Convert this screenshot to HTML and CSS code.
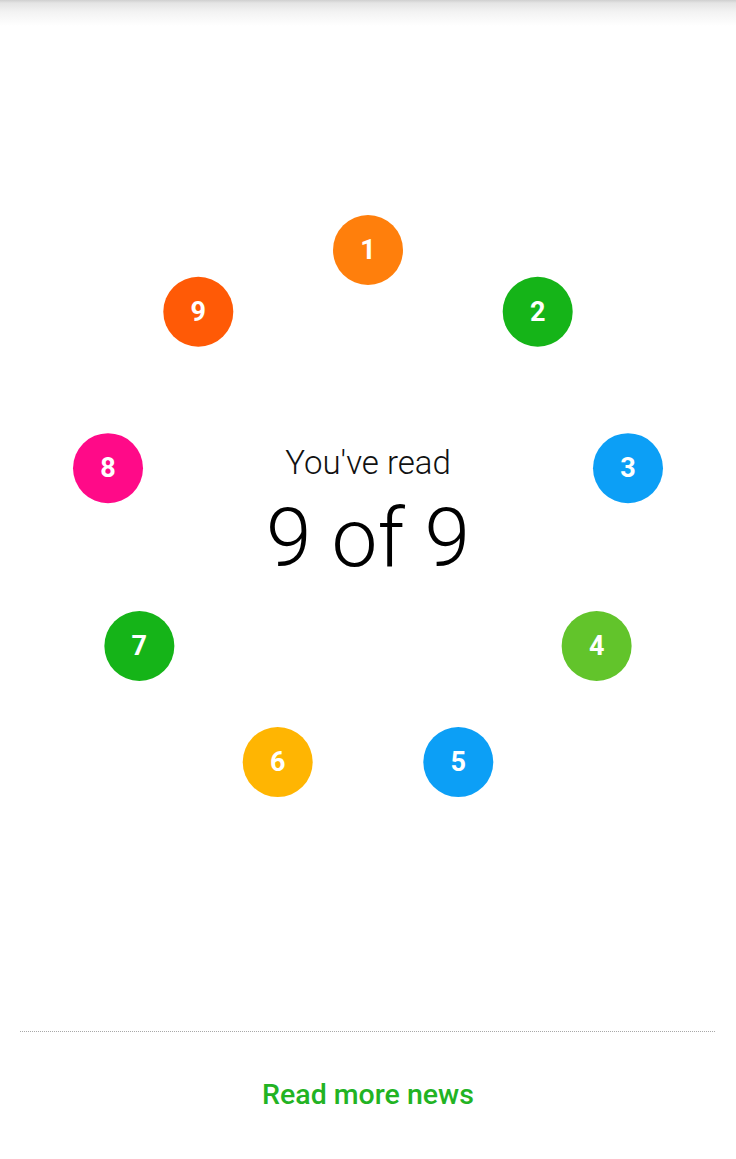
FILE: index.html
```html
<!DOCTYPE html>
<html>
<head>
<meta charset="utf-8">
<link rel="stylesheet" href="styles.css">
</head>
<body>
<div class="page">
  <div class="top-shadow"></div>
  <main class="stage">
    <div class="ring">
      <div class="dot n1">1</div>
      <div class="dot n2">2</div>
      <div class="dot n3">3</div>
      <div class="dot n4">4</div>
      <div class="dot n5">5</div>
      <div class="dot n6">6</div>
      <div class="dot n7">7</div>
      <div class="dot n8">8</div>
      <div class="dot n9">9</div>
      <div class="summary">
        <div class="label">You've read</div>
        <div class="count">9 of 9</div>
      </div>
    </div>
  </main>
  <footer class="footer">
    <div class="divider"></div>
    <a class="more" href="#">Read more news</a>
  </footer>
</div>
</body>
</html>
```

FILE: styles.css
```css
html, body {
  margin: 0;
  padding: 0;
  background: #fff;
}
body {
  font-family: Roboto, "Noto Sans", sans-serif;
  color: #111;
}
.page {
  position: relative;
  width: 736px;
  height: 1159px;
  display: flex;
  flex-direction: column;
  overflow: hidden;
}
.top-shadow {
  position: absolute;
  top: 0;
  left: 0;
  right: 0;
  height: 26px;
  background: linear-gradient(to bottom, #cfcfcf 0px, #e4e4e4 3px, #f3f3f3 12px, #ffffff 26px);
}
.stage {
  padding-top: 214px;
  display: flex;
  justify-content: center;
}
.ring {
  position: relative;
  width: 600px;
  height: 600px;
  display: flex;
  align-items: center;
  justify-content: center;
}
.dot {
  position: absolute;
  left: 265px;
  top: 265px;
  width: 70px;
  height: 70px;
  border-radius: 50%;
  color: #fff;
  font-weight: 700;
  font-size: 27px;
  display: flex;
  align-items: center;
  justify-content: center;
  transform: rotate(var(--a)) translateY(-264px) rotate(calc(-1 * var(--a)));
}
.n1 { --a: 0deg;   background: #ff7f0c; }
.n2 { --a: 40deg;  background: #15b418; }
.n3 { --a: 80deg;  background: #0c9ff6; }
.n4 { --a: 120deg; background: #62c42b; }
.n5 { --a: 160deg; background: #0c9ff6; }
.n6 { --a: 200deg; background: #ffb502; }
.n7 { --a: 240deg; background: #15b418; }
.n8 { --a: 280deg; background: #ff0a88; }
.n9 { --a: 320deg; background: #ff5a06; }
.summary {
  display: flex;
  flex-direction: column;
  align-items: center;
  margin-top: 0;
}
.label {
  font-weight: 300;
  font-size: 33px;
  line-height: 40px;
  color: #111;
}
.count {
  margin-top: 7px;
  font-weight: 300;
  font-size: 82px;
  line-height: 96px;
  color: #000;
}
.footer {
  margin-top: auto;
  display: flex;
  flex-direction: column;
  align-items: center;
  padding-bottom: 46px;
}
.divider {
  align-self: stretch;
  margin: 0 21px 0 20px;
  border-top: 1px dotted #a8a8a8;
}
.more {
  margin-top: 45px;
  font-size: 28.5px;
  font-weight: 500;
  line-height: 36px;
  color: #22b323;
  text-decoration: none;
}
```
